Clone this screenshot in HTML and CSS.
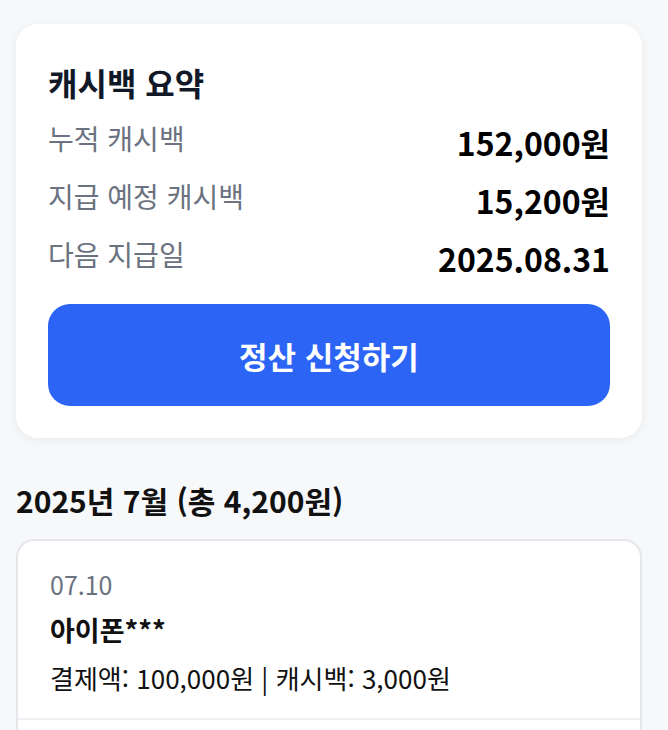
FILE: index.html
```html
<!DOCTYPE html>
<html lang="ko">
<head>
<meta charset="utf-8">
<link rel="stylesheet" href="styles.css">
</head>
<body>
<main class="page">
  <section class="summary">
    <h2 class="summary-title">캐시백 요약</h2>
    <div class="row"><span class="label">누적 캐시백</span><span class="value">152,000원</span></div>
    <div class="row"><span class="label">지급 예정 캐시백</span><span class="value">15,200원</span></div>
    <div class="row"><span class="label">다음 지급일</span><span class="value">2025.08.31</span></div>
    <button class="cta">정산 신청하기</button>
  </section>
  <h3 class="month">2025년 7월 (총 4,200원)</h3>
  <ul class="list">
    <li class="item">
      <div class="date">07.10</div>
      <div class="name">아이폰***</div>
      <div class="detail">결제액: 100,000원 | 캐시백: 3,000원</div>
    </li>
    <li class="item">
      <div class="date">07.08</div>
      <div class="name">에어팟***</div>
      <div class="detail">결제액: 40,000원 | 캐시백: 1,200원</div>
    </li>
  </ul>
</main>
</body>
</html>
```
FILE: styles.css
```css
* { box-sizing: border-box; }
html, body { margin: 0; padding: 0; }
body {
  background: #f7f8fa;
  font-family: "Noto Sans CJK KR", "Noto Sans", sans-serif;
  color: #111;
}
.page { width: 658px; padding: 24px 16px; }
.summary {
  background: #fff;
  border-radius: 22px;
  padding: 32px;
  box-shadow: 0 2px 10px rgba(0,0,0,0.06);
}
.summary-title {
  margin: 0 0 10px;
  font-size: 32px;
  font-weight: 700;
  color: #111827;
  line-height: 52px;
}
.row {
  display: flex;
  justify-content: space-between;
  align-items: flex-start;
  height: 58px;
}
.label { font-size: 28px; color: #6b7280; line-height: 40px; }
.value { font-size: 32px; font-weight: 700; color: #000; line-height: 48px; }
.cta {
  display: block;
  width: 100%;
  margin-top: 12px;
  height: 102px;
  border: 0;
  border-radius: 22px;
  background: #2c65f6;
  color: #fff;
  font-family: inherit;
  font-size: 31px;
  font-weight: 700;
}
.month {
  margin: 42px 0 19px;
  font-size: 30px;
  font-weight: 700;
  line-height: 40px;
}
.list {
  list-style: none;
  margin: 0;
  padding: 0;
  background: #fff;
  border: 2px solid #e5e7eb;
  border-radius: 18px;
}
.item { padding: 30px 32px 20px; border-bottom: 2px solid #eef0f3; }
.date { font-size: 25px; color: #6b7280; line-height: 26px; }
.name { font-size: 27px; font-weight: 700; line-height: 40px; margin-top: 13px; }
.detail { font-size: 26px; line-height: 40px; margin-top: 8px; color: #111; }
```
